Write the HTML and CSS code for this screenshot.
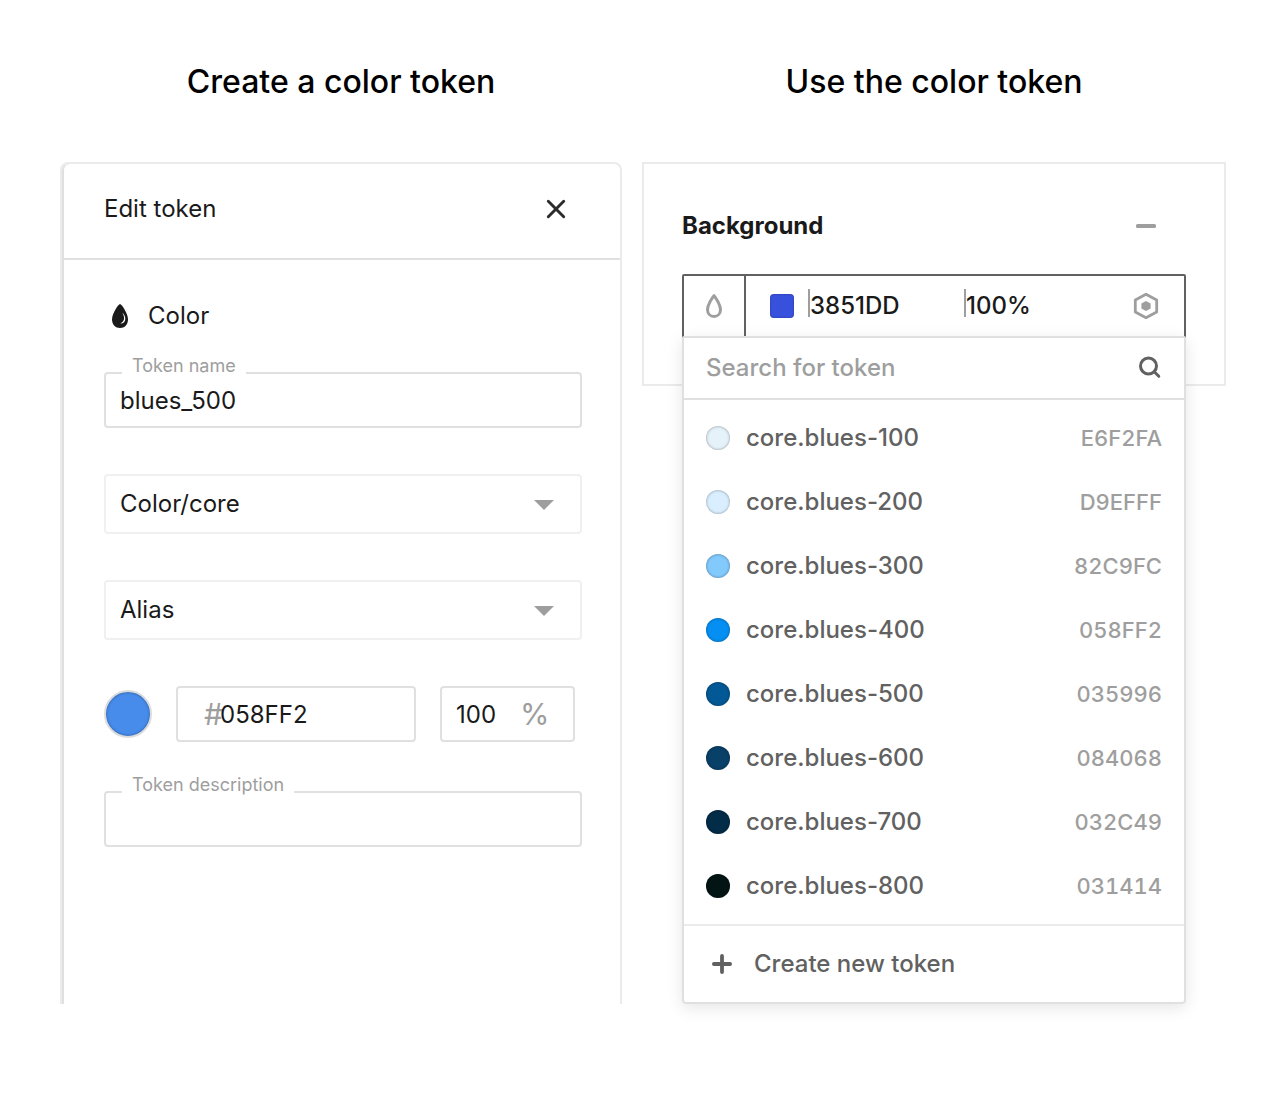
FILE: index.html
```html
<!DOCTYPE html>
<html lang="en">
<head>
<meta charset="utf-8">
<meta name="viewport" content="width=device-width, initial-scale=1">
<title>Color tokens</title>
<link rel="stylesheet" href="styles.css">
</head>
<body>
<main class="page">
  <section class="column">
    <h1 class="title">Create a color token</h1>
    <form class="editor">
      <header class="editor-header">
        <h2 class="editor-title">Edit token</h2>
        <button class="icon-button" type="button" aria-label="Close">
          <svg width="32" height="32" viewBox="0 0 32 32" fill="none" stroke="#2b2b2b" stroke-width="2.9" stroke-linecap="round"><path d="M8.300 8.300 23.700 23.700M23.700 8.300 8.300 23.700"/></svg>
        </button>
      </header>
      <div class="editor-body">
        <div class="kind">
          <svg width="32" height="32" viewBox="0 0 32 32"><path d="M16 4c-1.500 0-8 9.500-8 15.500C8 24.500 11.500 28 16 28s8-3.500 8-8.500C24 13.500 17.500 4 16 4z" fill="#1a1a1a"/><path d="M18.300 12.800c2.700 4.500 2.600 8.300-2 10.700 3.200.1 5-2 5-4.800 0-2.200-1.100-4.300-3-5.900z" fill="#fff"/></svg>
          <span>Color</span>
        </div>
        <div class="field">
          <label class="field-label" for="name">Token name</label>
          <input class="input" id="name" type="text" value="blues_500">
        </div>
        <div class="select-wrap">
          <select class="select" aria-label="Token group"><option>Color/core</option></select>
          <svg class="select-arrow" width="20" height="10" viewBox="0 0 20 10"><path d="M0 0h20L10 10z" fill="#9e9e9e"/></svg>
        </div>
        <div class="select-wrap">
          <select class="select" aria-label="Alias"><option>Alias</option></select>
          <svg class="select-arrow" width="20" height="10" viewBox="0 0 20 10"><path d="M0 0h20L10 10z" fill="#9e9e9e"/></svg>
        </div>
        <div class="value-row">
          <button class="color-preview" type="button" aria-label="Pick a color"></button>
          <div class="affix-box hex-box">
            <label class="affix" for="hex">#</label>
            <input class="bare-input" id="hex" type="text" value="058FF2">
          </div>
          <div class="affix-box opacity-box">
            <input class="bare-input opacity-input" id="opacity" type="text" value="100">
            <label class="affix" for="opacity">%</label>
          </div>
        </div>
        <div class="field">
          <label class="field-label" for="description">Token description</label>
          <input class="input" id="description" type="text">
        </div>
      </div>
    </form>
  </section>

  <section class="column">
    <h1 class="title">Use the color token</h1>
    <div class="panel">
      <header class="panel-header">
        <h2 class="panel-title">Background</h2>
        <button class="icon-button" type="button" aria-label="Remove background">
          <svg width="32" height="32" viewBox="0 0 32 32"><rect x="6" y="14" width="20" height="4" rx="1.500" fill="#9e9e9e"/></svg>
        </button>
      </header>
      <div class="picker">
        <div class="picker-field">
          <button class="picker-type" type="button" aria-label="Color styles">
            <svg width="32" height="32" viewBox="0 0 32 32" fill="none" stroke="#9e9e9e" stroke-width="3" stroke-linejoin="round"><path d="M16 5.700c-1.800 2-6.500 9.200-6.500 13.800 0 4.200 2.900 7 6.500 7s6.500-2.800 6.500-7c0-4.600-4.700-11.800-6.500-13.800z"/></svg>
          </button>
          <span class="square"></span>
          <input class="picker-input picker-hex" type="text" value="3851DD" aria-label="Hex value">
          <input class="picker-input picker-opacity" type="text" value="100%" aria-label="Opacity">
          <button class="icon-button picker-token" type="button" aria-label="Tokens">
            <svg width="32" height="32" viewBox="0 0 32 32" fill="none" stroke="#9e9e9e" stroke-width="2.800" stroke-linejoin="round"><path d="M16 4.300 26.700 10v12L16 27.700 5.300 22V10z"/><path d="M16 11l4.600 2.500v5L16 21l-4.600-2.500v-5z" fill="#9e9e9e" stroke="none"/></svg>
          </button>
        </div>
        <div class="dropdown">
          <div class="search">
            <input class="search-input" type="search" placeholder="Search for token" aria-label="Search for token">
            <button class="icon-button" type="button" aria-label="Search">
              <svg width="32" height="32" viewBox="0 0 32 32" fill="none" stroke="#616161" stroke-width="3" stroke-linecap="round"><circle cx="14.500" cy="14" r="8"/><path d="M20.500 20l4.300 4.300"/></svg>
            </button>
          </div>
          <ul class="token-list">
            <li><button class="token" type="button"><span class="dot dot-100"></span><span class="token-name">core.blues-100</span><span class="token-hex">E6F2FA</span></button></li>
            <li><button class="token" type="button"><span class="dot dot-200"></span><span class="token-name">core.blues-200</span><span class="token-hex">D9EFFF</span></button></li>
            <li><button class="token" type="button"><span class="dot dot-300"></span><span class="token-name">core.blues-300</span><span class="token-hex">82C9FC</span></button></li>
            <li><button class="token" type="button"><span class="dot dot-400"></span><span class="token-name">core.blues-400</span><span class="token-hex">058FF2</span></button></li>
            <li><button class="token" type="button"><span class="dot dot-500"></span><span class="token-name">core.blues-500</span><span class="token-hex">035996</span></button></li>
            <li><button class="token" type="button"><span class="dot dot-600"></span><span class="token-name">core.blues-600</span><span class="token-hex">084068</span></button></li>
            <li><button class="token" type="button"><span class="dot dot-700"></span><span class="token-name">core.blues-700</span><span class="token-hex">032C49</span></button></li>
            <li><button class="token" type="button"><span class="dot dot-800"></span><span class="token-name">core.blues-800</span><span class="token-hex">031414</span></button></li>
          </ul>
          <button class="create" type="button">
            <svg width="32" height="32" viewBox="0 0 32 32" fill="none" stroke="#616161" stroke-width="3.800" stroke-linecap="round"><path d="M16 7.900v16.200M7.900 16h16.200"/></svg>
            <span>Create new token</span>
          </button>
        </div>
      </div>
    </div>
  </section>
</main>
</body>
</html>
```
FILE: styles.css
```css
* {
  box-sizing: border-box;
}

body {
  margin: 0;
  background: #fff;
  color: #1a1a1a;
  font: 24px/32px Inter, "Liberation Sans", sans-serif;
}

h1, h2, ul {
  margin: 0;
  padding: 0;
}

button, input, select {
  margin: 0;
  padding: 0;
  border: 0;
  border-radius: 0;
  background: none;
  color: inherit;
  font: inherit;
}

input, select {
  min-width: 0;
  outline: 0;
  appearance: none;
}

button {
  cursor: pointer;
}

svg {
  display: block;
  flex: none;
}

.page {
  display: grid;
  grid-template-columns: 562fr 584fr;
  gap: 20px;
  padding: 62px 60px 90px;
}

.column {
  min-width: 0;
}

.title {
  margin-bottom: 60px;
  color: #000;
  font-size: 32px;
  font-weight: 500;
  line-height: 40px;
  text-align: center;
}

.icon-button {
  flex: none;
  width: 32px;
  height: 32px;
}

/* Token editor */
.editor {
  border: 2px solid #ebebeb;
  border-bottom: 0;
  border-radius: 8px 8px 0 0;
  box-shadow: inset 2px 0 #e0e0e0;
}

.editor-header {
  display: flex;
  justify-content: space-between;
  align-items: center;
  height: 96px;
  margin-left: 2px;
  padding: 0 48px 4px 40px;
  border-bottom: 2px solid #e0e0e0;
}

.editor-title {
  font-size: 24px;
  font-weight: 400;
}

.editor-body {
  display: flex;
  flex-direction: column;
  gap: 46px;
  padding: 40px 38px 157px 42px;
}

.kind {
  display: flex;
  gap: 12px;
  margin-bottom: -6px;
}

.field {
  position: relative;
}

.field-label {
  position: absolute;
  top: -18px;
  left: 18px;
  padding: 0 10px;
  background: #fff;
  color: #9e9e9e;
  font-size: 18px;
  line-height: 24px;
}

.input {
  display: block;
  width: 100%;
  height: 56px;
  padding: 0 14px;
  border: 2px solid #e0e0e0;
  border-radius: 4px;
}

.select-wrap {
  display: grid;
  align-items: center;
}

.select, .select-arrow {
  grid-area: 1 / 1;
}

.select {
  width: 100%;
  height: 60px;
  padding: 0 60px 0 14px;
  border: 2px solid #f0f0f0;
  border-radius: 4px;
}

.select-arrow {
  justify-self: end;
  margin: 2px 28px 0 0;
  pointer-events: none;
}

.value-row {
  display: flex;
  align-items: center;
  gap: 24px;
  margin-bottom: 3px;
}

.color-preview {
  flex: none;
  width: 48px;
  height: 48px;
  border: 2px solid #dcdcdc;
  border-radius: 50%;
  background: #478ceb;
  box-shadow: inset 0 0 3px rgba(0, 0, 0, 0.4);
}

.affix-box {
  display: flex;
  align-items: center;
  height: 56px;
  border: 2px solid #e0e0e0;
  border-radius: 4px;
}

.hex-box {
  width: 240px;
  padding-left: 26px;
}

.hex-box .affix {
  width: 16px;
}

.opacity-box {
  width: 135px;
  padding-left: 14px;
}

.affix {
  color: #9e9e9e;
  font-size: 30px;
}

.bare-input {
  width: 100%;
  padding-top: 2px;
}

.opacity-input {
  width: 64px;
}

/* Background panel */
.panel {
  padding: 46px 38px;
  border: 2px solid #ebebeb;
}

.panel-header {
  display: flex;
  justify-content: space-between;
  align-items: center;
  margin-bottom: 32px;
  padding-right: 24px;
}

.panel-title {
  font-size: 24px;
  font-weight: 700;
}

.picker {
  position: relative;
}

.picker-field {
  display: flex;
  align-items: center;
  height: 64px;
  border: 2px solid #616161;
  border-radius: 2px 2px 0 0;
}

.picker-type {
  display: grid;
  place-items: center;
  flex: none;
  width: 62px;
  height: 60px;
  border-right: 2px solid #616161;
}

.square {
  flex: none;
  width: 24px;
  height: 24px;
  margin: 0 14px 0 24px;
  border-radius: 4px;
  background: #3851dd;
  box-shadow: inset 0 0 2px rgba(0, 0, 0, 0.4);
}

.picker-input {
  height: 28px;
  margin-bottom: 6px;
  padding-top: 6px;
  border-left: 2px solid #9e9e9e;
  font-weight: 500;
}

.picker-hex {
  flex: 0 0 156px;
}

.picker-opacity {
  flex: 1;
}

.picker-token {
  margin: 0 22px;
}

.dropdown {
  position: absolute;
  top: 62px;
  right: 0;
  left: 0;
  border: 2px solid #e0e0e0;
  border-radius: 2px 2px 4px 4px;
  background: #fff;
  box-shadow: 0 4px 16px rgba(0, 0, 0, 0.1);
  color: #616161;
  font-weight: 500;
}

.search {
  display: flex;
  align-items: center;
  height: 62px;
  padding: 0 18px 0 22px;
  border-bottom: 2px solid #e0e0e0;
}

.search-input {
  flex: 1;
}

.search-input::placeholder {
  color: #9e9e9e;
}

.token-list {
  padding: 6px 0;
  list-style: none;
}

.token {
  display: flex;
  align-items: center;
  gap: 16px;
  width: 100%;
  height: 64px;
  padding: 0 22px;
  text-align: left;
}

.token-name {
  flex: 1;
}

.token-hex {
  color: #9e9e9e;
  font-size: 22px;
  font-variant-numeric: tabular-nums;
}

.dot {
  flex: none;
  width: 24px;
  height: 24px;
  border-radius: 50%;
  box-shadow: inset 0 0 3px rgba(0, 0, 0, 0.4);
}

.dot-100 { background: #e6f2fa; }
.dot-200 { background: #d9efff; }
.dot-300 { background: #82c9fc; }
.dot-400 { background: #058ff2; }
.dot-500 { background: #035996; }
.dot-600 { background: #084068; }
.dot-700 { background: #032c49; }
.dot-800 { background: #031414; }

.create {
  display: flex;
  align-items: center;
  gap: 16px;
  width: 100%;
  height: 78px;
  padding: 0 22px;
  border-top: 2px solid #ebebeb;
}
```
